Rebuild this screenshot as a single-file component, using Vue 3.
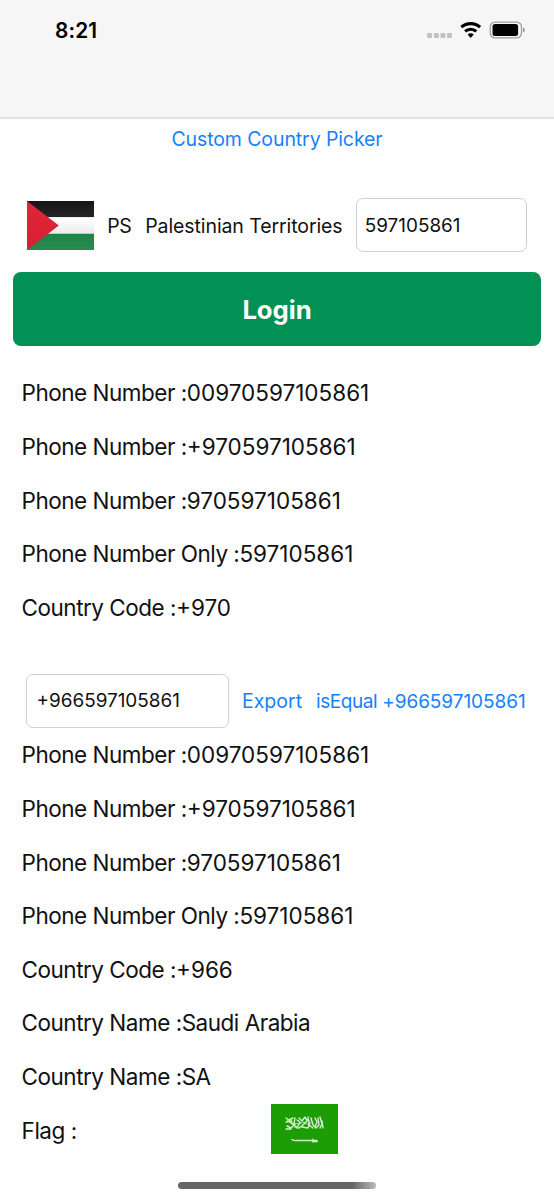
<script setup>
const nationalRows = [
  ['Phone Number :', '00970597105861'],
  ['Phone Number :', '+970597105861'],
  ['Phone Number :', '970597105861'],
  ['Phone Number Only :', '597105861'],
  ['Country Code :', '+970'],
]
const exportRows = [
  ['Phone Number :', '00970597105861'],
  ['Phone Number :', '+970597105861'],
  ['Phone Number :', '970597105861'],
  ['Phone Number Only :', '597105861'],
  ['Country Code :', '+966'],
]
const regionRows = ['Country Name :Saudi Arabia', 'Country Name :SA']
</script>

<template>
  <main class="screen">
    <header class="bar">
      <span class="time">8:21</span>
      <svg class="status" width="100" height="24" viewBox="0 0 100 24">
        <g fill="#c3c2c3">
          <rect x="2" y="14" width="5" height="5" rx="1.3" />
          <rect x="8.8" y="14" width="5" height="5" rx="1.3" />
          <rect x="15.5" y="14" width="5" height="5" rx="1.3" />
          <rect x="22" y="14" width="5" height="5" rx="1.3" />
        </g>
        <g fill="none" stroke="#000" stroke-width="3.1">
          <path d="M36.3 8.2a14.2 14.2 0 0 1 18.8 0" />
          <path d="M40.1 12.4a8.3 8.3 0 0 1 11.2 0" />
        </g>
        <path d="M42.6 15.6a4.7 4.7 0 0 1 6.2 0l-3.1 3.4z" fill="#000" />
        <rect x="65.3" y="3.1" width="31.2" height="15.8" rx="4.8" fill="none" stroke="#9c9c9c" stroke-width="1.3" />
        <rect x="67.5" y="5.1" width="25.6" height="11.8" rx="2.5" fill="#000" />
        <path d="M98 8.5q2 .6 2 2.5t-2 2.5z" fill="#9c9c9c" />
      </svg>
    </header>

    <div class="picker"><a>Custom Country Picker</a></div>

    <section class="country">
      <svg class="flag-ps" width="67" height="49" viewBox="0 0 68 49" preserveAspectRatio="none">
        <defs>
          <linearGradient id="psBlack" x2="0" y2="1"><stop stop-color="#151515" /><stop offset="1" stop-color="#252525" /></linearGradient>
          <linearGradient id="psWhite" x2="0" y2="1"><stop stop-color="#fff" /><stop offset="1" stop-color="#ececec" /></linearGradient>
          <linearGradient id="psGreen" x2="0" y2="1"><stop stop-color="#198548" /><stop offset="1" stop-color="#2a8b50" /></linearGradient>
          <linearGradient id="psRed" x2="0" y2="1"><stop stop-color="#e12539" /><stop offset="1" stop-color="#d71f34" /></linearGradient>
        </defs>
        <rect width="68" height="16.3" fill="url(#psBlack)" />
        <rect y="16.3" width="68" height="16.4" fill="url(#psWhite)" />
        <rect y="32.7" width="68" height="16.3" fill="url(#psGreen)" />
        <path d="M0 0L32.3 24.5L0 49z" fill="url(#psRed)" />
      </svg>
      <span class="code">PS</span>
      <span class="name">Palestinian Territories</span>
      <div class="field phone"><span>597105861</span></div>
    </section>

    <button class="login">Login</button>

    <section class="rows first">
      <p v-for="[label, value] in nationalRows" :key="label + value"><span>{{ label }}</span><span class="digits">{{ value }}</span></p>
    </section>

    <section class="export">
      <div class="field intl"><span>+966597105861</span></div>
      <a class="exp">Export</a>
      <a class="equal">isEqual <span class="digits">+966597105861</span></a>
    </section>

    <section class="rows second">
      <p v-for="[label, value] in exportRows" :key="label + value"><span>{{ label }}</span><span class="digits">{{ value }}</span></p>
      <p v-for="text in regionRows" :key="text">{{ text }}</p>
      <p class="flag-row">
        <span>Flag :</span>
        <svg class="flag-sa" width="67" height="50" viewBox="0 0 67 50">
          <rect width="67" height="50" fill="#1b9d03" />
          <g fill="none" stroke="#d5efcf" stroke-width="1.4" stroke-linecap="round" stroke-linejoin="round">
            <path d="M15 14l3 2 4-2M15 18l6-1M16 22l4 2 3-3-4-3M15 25h5M24 14l-1 6 3 4 3-6-3-2M28 14l3 3 3-4 2 4-4 4-4 3M31 23l6 1 2-5M37 13l1 8 4 3M40 14l2 7 2 2 2-5-2-4M45 24l3-3-1-7M49 13l2 7-2 4M51 17l1 7" />
            <path d="M21 19l7 1 5-2 6 4M34 14l5 3M16 16l5 4M23 23l5 1" stroke-width=".8" />
            <path d="M21 35.5q2 1.5 5 1h20" />
            <path d="M42 35.3v2.8M43 37.5h3" />
          </g>
        </svg>
      </p>
    </section>

    <div class="home"></div>
  </main>
</template>

<style>
html, body { margin: 0; background: #fefefe; }
</style>

<style scoped>
.screen { width: 554px; height: 1200px; overflow: hidden; display: flex; flex-direction: column; background: #fefefe; color: #111; font-family: Inter, "Liberation Sans", sans-serif; }
.bar { box-sizing: border-box; height: 119px; flex: none; display: flex; justify-content: space-between; padding: 19px 30px 0 55px; background: #f7f6f7; border-bottom: 2px solid #e3e3e3; }
.bar .status { margin-right: -1px; }
.time { font-size: 20.8px; line-height: 24px; font-weight: 600; color: #000; letter-spacing: .1px; }
.status { display: block; }
a { color: #1582fb; white-space: nowrap; }
.picker { height: 40px; flex: none; text-align: center; font-size: 19.5px; line-height: 40px; letter-spacing: -.1px; }
.country { flex: none; height: 54px; margin-top: 39px; padding: 0 27px 0 26.6px; display: flex; align-items: center; white-space: nowrap; }
.code { width: 38px; margin-left: 13.6px; font-size: 19.5px; letter-spacing: -.3px; padding-top: 1px; }
.name { width: 210.6px; font-size: 19.5px; letter-spacing: -.09px; padding-top: 1px; }
.field { box-sizing: border-box; height: 54px; border: 1.5px solid #d0d0d0; border-radius: 7px; display: flex; align-items: center; font-size: 18.9px; background: #fff; }
.phone { flex: 1; padding-left: 8px; }
.login { flex: none; height: 74px; margin: 20px 13px 0; padding: 0; border: 0; border-radius: 8px; background: #019154; color: #fff; font: 700 25.7px Inter, sans-serif; letter-spacing: -.05px; }
.rows { flex: none; padding-left: 21.6px; }
.rows p { margin: 0; height: 53.62px; display: flex; align-items: center; font-size: 22.5px; letter-spacing: -.49px; white-space: nowrap; }
.rows .digits { letter-spacing: 0; }
.first { margin-top: 20.2px; }
.export { flex: none; height: 54px; margin-top: 39.3px; padding-left: 26px; display: flex; align-items: center; font-size: 19px; }
.intl { width: 203px; padding-left: 9.5px; }
.exp { width: 60px; margin-left: 13px; padding-top: 1px; font-size: 19.5px; }
.equal { margin-left: 14px; padding-top: 1px; letter-spacing: -.42px; }
.equal .digits { letter-spacing: -.06px; }
.second { margin-top: .5px; }
.flag-row { position: relative; }
.flag-sa { position: absolute; left: 249.4px; top: 1px; }
.home { width: 198px; height: 7px; flex: none; margin: 25.5px 0 0 178px; border-radius: 4px; background: linear-gradient(90deg, #666 0 88%, #bbb); }
</style>
